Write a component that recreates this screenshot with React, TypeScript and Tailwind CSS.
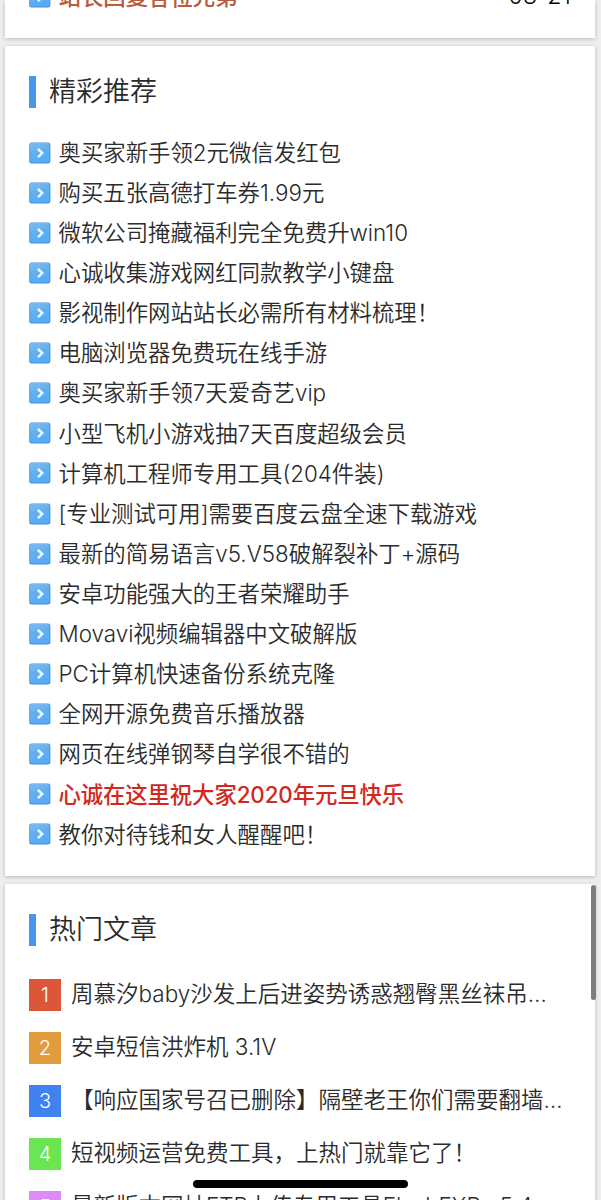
import clsx from "clsx";

type Post = {
  title: string;
  highlight?: boolean;
};

type HotPost = {
  title: string;
  color: string;
};

const recommended: Post[] = [
  { title: "奥买家新手领2元微信发红包" },
  { title: "购买五张高德打车券1.99元" },
  { title: "微软公司掩藏福利完全免费升win10" },
  { title: "心诚收集游戏网红同款教学小键盘" },
  { title: "影视制作网站站长必需所有材料梳理！" },
  { title: "电脑浏览器免费玩在线手游" },
  { title: "奥买家新手领7天爱奇艺vip" },
  { title: "小型飞机小游戏抽7天百度超级会员" },
  { title: "计算机工程师专用工具(204件装)" },
  { title: "[专业测试可用]需要百度云盘全速下载游戏" },
  { title: "最新的简易语言v5.V58破解裂补丁+源码" },
  { title: "安卓功能强大的王者荣耀助手" },
  { title: "Movavi视频编辑器中文破解版" },
  { title: "PC计算机快速备份系统克隆" },
  { title: "全网开源免费音乐播放器" },
  { title: "网页在线弹钢琴自学很不错的" },
  { title: "心诚在这里祝大家2020年元旦快乐", highlight: true },
  { title: "教你对待钱和女人醒醒吧！" },
];

const hot: HotPost[] = [
  { title: "周慕汐baby沙发上后进姿势诱惑翘臀黑丝袜吊…", color: "bg-[#dc5639]" },
  { title: "安卓短信洪炸机 3.1V", color: "bg-[#e29c3c]" },
  { title: "【响应国家号召已删除】隔壁老王你们需要翻墙…", color: "bg-[#4083f0]" },
  { title: "短视频运营免费工具，上热门就靠它了！", color: "bg-[#6be652]" },
  { title: "最新版本网址FTP上传专用工具FlashFXP v5.4", color: "bg-[#dc8cf5]" },
];

function Bullet() {
  return (
    <svg viewBox="0 0 22 22" className="mr-[7.5px] size-[22px] shrink-0">
      <defs>
        <linearGradient id="bullet" x1="0" y1="0" x2="0.3" y2="1">
          <stop offset="0" stopColor="#7fbcef" />
          <stop offset="0.5" stopColor="#62aff0" />
          <stop offset="1" stopColor="#55adf7" />
        </linearGradient>
      </defs>
      <rect x="0.2" y="0.4" width="21.2" height="21.2" rx="2.5" fill="#4a92da" />
      <rect x="0.9" y="0.9" width="19.6" height="19.4" rx="2" fill="url(#bullet)" />
      <path d="M8.9 7l4.4 4.1-4.4 4.1" fill="none" stroke="#e9fafa" strokeWidth="2.4" />
    </svg>
  );
}

function SectionTitle({ children }: { children: string }) {
  return (
    <div className="flex h-8 items-center">
      <span className="mr-[13.5px] h-8 w-[6.5px] bg-[#4a94ee]" />
      <h2 className="text-[27px] leading-8 font-[350] text-[#2b2b2b]">{children}</h2>
    </div>
  );
}

export default function App() {
  return (
    <main className="relative flex h-[1200px] w-[601px] flex-col gap-2 overflow-hidden bg-[#eeeeee] pr-1.5 pl-[5px] font-['Inter','Noto_Sans_CJK_SC',sans-serif] text-[22.4px] font-[350] text-[#2b2b2b]">
      <section className="flex h-[38px] shrink-0 flex-col justify-end bg-white pr-6 pb-[21px] pl-6 shadow-[0_1px_4px_rgba(0,0,0,0.22)]">
        <div className="flex h-10 shrink-0 items-center whitespace-nowrap">
          <Bullet />
          <span className="font-medium text-[#b85a3c]">站长回复各位兄弟</span>
          <span className="ml-auto pb-0.5 text-[23px] tracking-[0.3px] text-black">08-21</span>
        </div>
      </section>

      <section className="h-[830px] shrink-0 bg-white px-6 pt-[30px] shadow-[0_1px_4px_rgba(0,0,0,0.22)]">
        <SectionTitle>精彩推荐</SectionTitle>
        <ul className="mt-[24.5px]">
          {recommended.map((post) => (
            <li key={post.title} className="flex h-[40.12px] items-center whitespace-nowrap">
              <Bullet />
              <span className={clsx(post.highlight && "font-medium tracking-[-0.12px] text-[#d2291f]")}>
                {post.title}
              </span>
            </li>
          ))}
        </ul>
      </section>

      <section className="h-[400px] shrink-0 bg-white px-6 pt-[30px] shadow-[0_1px_4px_rgba(0,0,0,0.22)]">
        <SectionTitle>热门文章</SectionTitle>
        <ol className="mt-[22px]">
          {hot.map((post, i) => (
            <li key={post.title} className="flex h-[53px] items-center whitespace-nowrap">
              <span
                className={clsx("mr-2.5 flex size-8 shrink-0 items-center justify-center text-xl text-white", post.color)}
              >
                {i + 1}
              </span>
              <span className="pb-0.5 text-[22.5px]">{post.title}</span>
            </li>
          ))}
        </ol>
      </section>

      {/* scroll thumb and home indicator */}
      <div className="absolute top-[885px] right-[5px] h-[115px] w-[5px] rounded-full bg-[#7d7d7d]" />
      <div className="absolute top-[1180px] left-[193px] h-2 w-[215px] rounded-full bg-black" />
    </main>
  );
}
